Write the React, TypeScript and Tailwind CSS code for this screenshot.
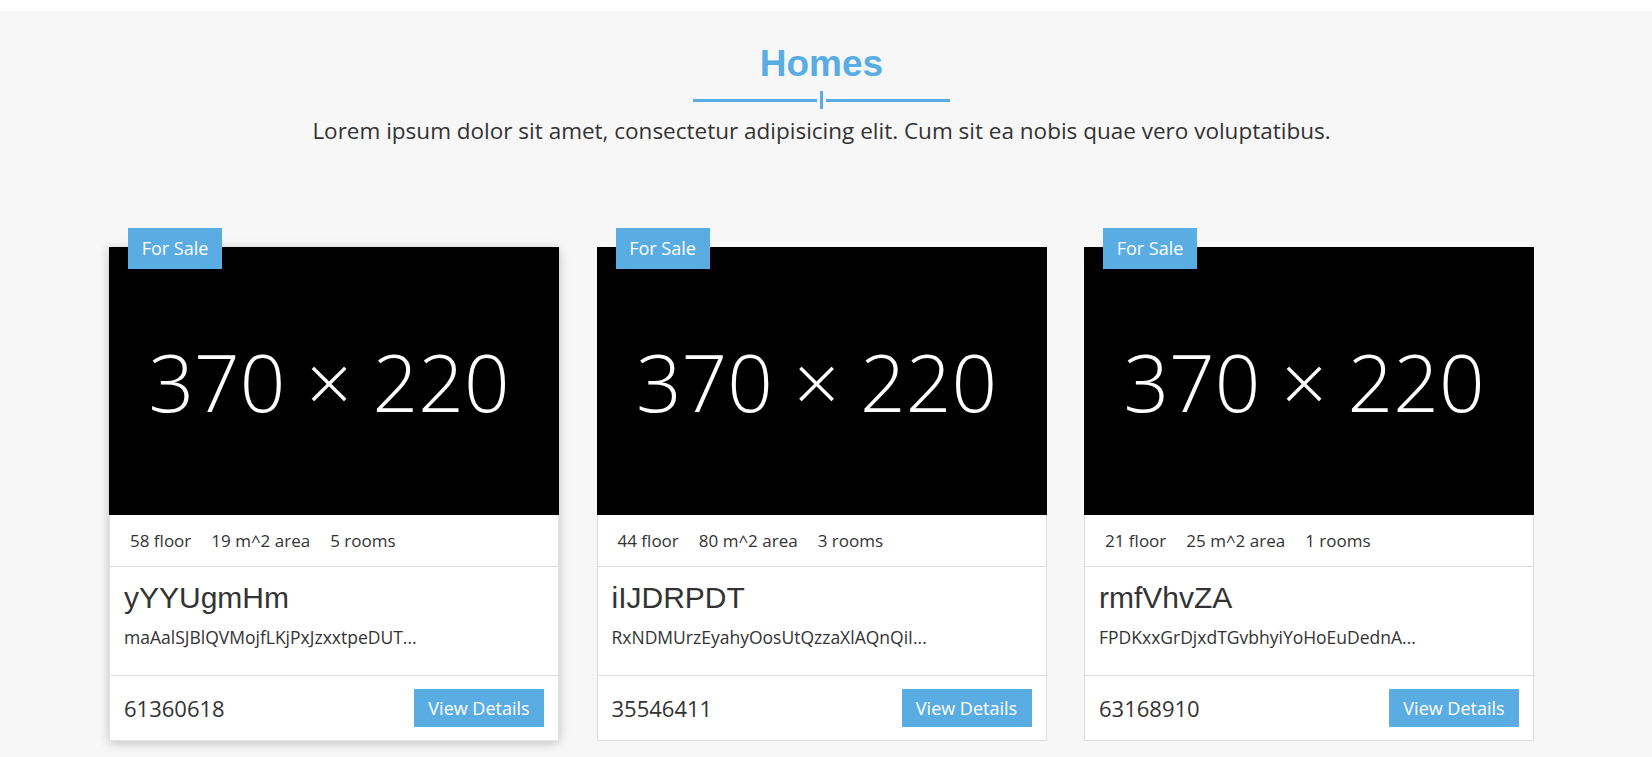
const homes = [
  {
    floor: 58,
    area: 19,
    rooms: 5,
    title: "yYYUgmHm",
    desc: "maAalSJBlQVMojfLKjPxJzxxtpeDUT...",
    price: "61360618",
    hover: true,
  },
  {
    floor: 44,
    area: 80,
    rooms: 3,
    title: "iIJDRPDT",
    desc: "RxNDMUrzEyahyOosUtQzzaXlAQnQiI...",
    price: "35546411",
    hover: false,
  },
  {
    floor: 21,
    area: 25,
    rooms: 1,
    title: "rmfVhvZA",
    desc: "FPDKxxGrDjxdTGvbhyiYoHoEuDednA...",
    price: "63168910",
    hover: false,
  },
];

type Home = (typeof homes)[number];

function HomeCard({ home }: { home: Home }) {
  return (
    <div
      className={`relative bg-white ${
        home.hover
          ? "border border-[#e2e2e2] shadow-[0_2px_10px_rgba(0,0,0,0.22)]"
          : "border border-[#dddddd]"
      }`}
    >
      {/* 뱃지 */}
      <span className="absolute left-[18px] top-[-20px] z-10 flex h-[41px] w-[94px] items-center justify-center bg-[#5aade3] text-[18px] text-white">
        For Sale
      </span>

      {/* 이미지 자리 */}
      <div className="-mx-px -mt-px flex h-[268px] items-center justify-center bg-black">
        <span className="pr-[10px] text-[80px] font-light leading-none text-white">
          370 × 220
        </span>
      </div>

      {/* 정보 */}
      <div className="flex h-[52px] items-center gap-5 border-b border-[#dddddd] pl-5 text-[17px] text-[#333]">
        <span>{home.floor} floor</span>
        <span>{home.area} m^2 area</span>
        <span>{home.rooms} rooms</span>
      </div>

      <div className="border-b border-[#dddddd] px-[14px] pb-[27px] pt-[14px]">
        <h3 className="font-['Liberation_Sans',Arial,sans-serif] text-[30px] leading-[33px] text-[#333]">
          {home.title}
        </h3>
        <p className="mt-[12px] text-[17.5px] leading-[22px] text-[#333]">
          {home.desc}
        </p>
      </div>

      <div className="flex items-center justify-between px-[14px] py-[13px]">
        <span className="text-[22px] text-[#333]">{home.price}</span>
        <button className="h-[38px] w-[130px] bg-[#5aade3] text-[18px] text-white">
          View Details
        </button>
      </div>
    </div>
  );
}

export default function App() {
  return (
    <div className="min-h-[757px] bg-[#f7f7f7] font-['Open_Sans',sans-serif]">
      <div className="h-[11px] bg-white" />
      <div className="w-[1643px] pb-10 pt-[33px]">
        <h2 className="text-center font-['Liberation_Sans',Arial,sans-serif] text-[37px] font-bold leading-[40px] text-[#5aade3]">
          Homes
        </h2>

        {/* 구분선 */}
        <div className="mt-[7px] flex h-[18px] items-center justify-center">
          <div className="h-[3px] w-[124px] bg-[#5aade3]" />
          <div className="mx-[3px] h-[18px] w-[3px] bg-[#5aade3]" />
          <div className="h-[3px] w-[124px] bg-[#5aade3]" />
        </div>

        <p className="mt-[8px] text-center text-[22.5px] leading-[28px] text-[#333]">
          Lorem ipsum dolor sit amet, consectetur adipisicing elit. Cum sit ea
          nobis quae vero voluptatibus.
        </p>

        <div className="mt-[102px] flex justify-center gap-[37.5px]">
          {homes.map((home) => (
            <div key={home.title} className="w-[450px]">
              <HomeCard home={home} />
            </div>
          ))}
        </div>
      </div>
    </div>
  );
}
